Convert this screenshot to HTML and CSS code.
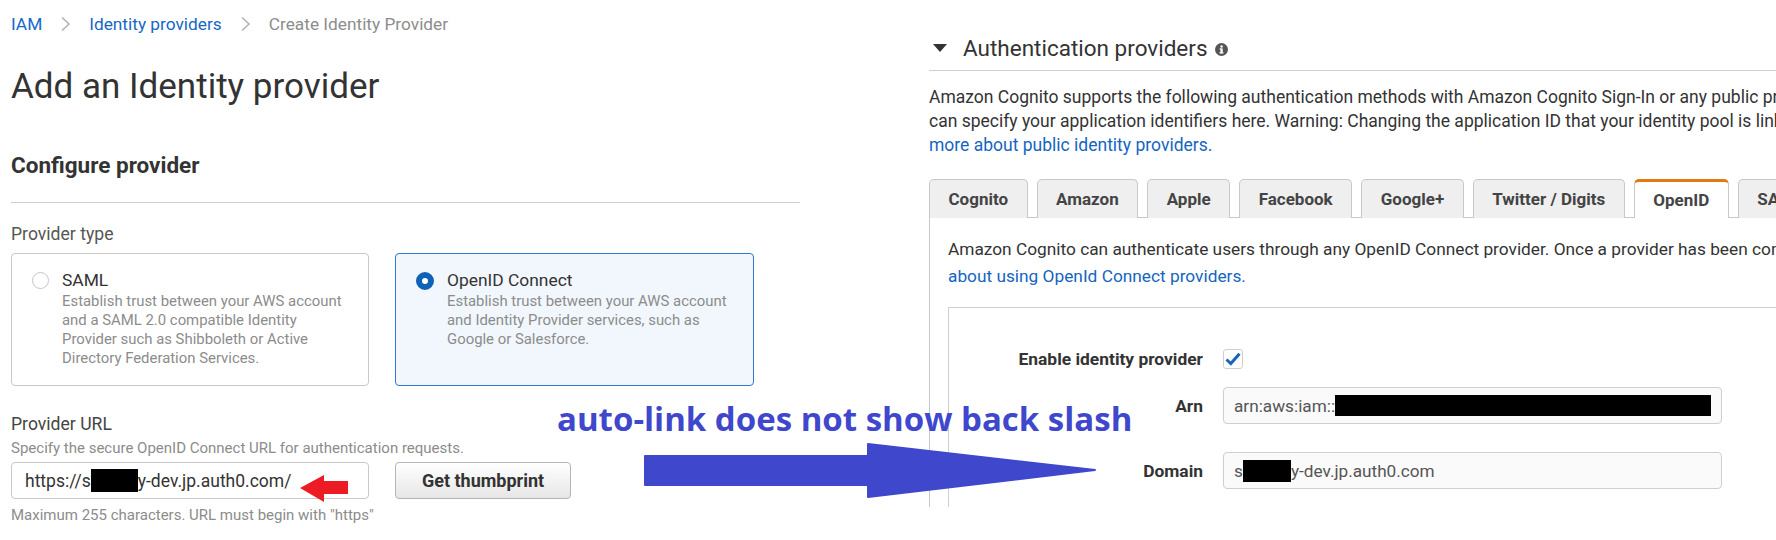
FILE: index.html
```html
<!DOCTYPE html>
<html lang="en">
<head>
<meta charset="utf-8">
<title>Add an Identity provider</title>
<link rel="stylesheet" href="styles.css">
</head>
<body>
<div class="page">
  <section class="left">
    <nav class="crumbs">
      <a class="crumb-link">IAM</a>
      <svg class="chev" width="11" height="16" viewBox="0 0 11 16"><polyline points="2,1.5 9,8 2,14.5" fill="none" stroke="#b4b4b4" stroke-width="1.6"/></svg>
      <a class="crumb-link">Identity providers</a>
      <svg class="chev" width="11" height="16" viewBox="0 0 11 16"><polyline points="2,1.5 9,8 2,14.5" fill="none" stroke="#b4b4b4" stroke-width="1.6"/></svg>
      <span class="crumb-current">Create Identity Provider</span>
    </nav>
    <h1 class="title">Add an Identity provider</h1>
    <h2 class="section-title">Configure provider</h2>
    <div class="divider"></div>
    <div class="field-label type-label">Provider type</div>
    <div class="cards">
      <div class="card">
        <span class="radio"></span>
        <div class="card-body">
          <div class="card-title">SAML</div>
          <div class="card-desc">Establish trust between your AWS account<br>and a SAML 2.0 compatible Identity<br>Provider such as Shibboleth or Active<br>Directory Federation Services.</div>
        </div>
      </div>
      <div class="card card-selected">
        <span class="radio radio-on"></span>
        <div class="card-body">
          <div class="card-title">OpenID Connect</div>
          <div class="card-desc">Establish trust between your AWS account<br>and Identity Provider services, such as<br>Google or Salesforce.</div>
        </div>
      </div>
    </div>
    <div class="field-label url-label">Provider URL</div>
    <div class="hint">Specify the secure OpenID Connect URL for authentication requests.</div>
    <div class="url-row">
      <div class="text-input">https://s<span class="redact redact-url"></span>y-dev.jp.auth0.com/</div>
      <button class="btn">Get thumbprint</button>
    </div>
    <div class="hint hint-after">Maximum 255 characters. URL must begin with "https"</div>
  </section>

  <section class="right">
    <div class="panel-head">
      <svg class="caret" width="14" height="8" viewBox="0 0 14 8"><polygon points="0,0 14,0 7,8" fill="#333"/></svg>
      <span class="panel-title">Authentication providers</span>
      <svg class="info" width="13" height="13" viewBox="0 0 13 13"><circle cx="6.5" cy="6.5" r="6.5" fill="#555"/><rect x="5.4" y="5.4" width="2.3" height="4.8" fill="#fff"/><rect x="4.5" y="9.3" width="4" height="1.2" fill="#fff"/><rect x="4.6" y="5.4" width="1.5" height="1.1" fill="#fff"/><circle cx="6.6" cy="3.4" r="1.25" fill="#fff"/></svg>
    </div>
    <div class="panel-text">
      <div class="line">Amazon Cognito supports the following authentication methods with Amazon Cognito Sign-In or any public provider. If you</div>
      <div class="line">can specify your application identifiers here. Warning: Changing the application ID that your identity pool is linked to</div>
      <div class="line"><a class="link">more about public identity providers.</a></div>
    </div>
    <div class="tabs">
      <div class="tab">Cognito</div>
      <div class="tab">Amazon</div>
      <div class="tab">Apple</div>
      <div class="tab">Facebook</div>
      <div class="tab">Google+</div>
      <div class="tab">Twitter / Digits</div>
      <div class="tab tab-active">OpenID</div>
      <div class="tab">SAML</div>
    </div>
    <div class="tab-body">
      <div class="tab-text">
        <div class="line">Amazon Cognito can authenticate users through any OpenID Connect provider. Once a provider has been configured,</div>
        <div class="line"><a class="link">about using OpenId Connect providers.</a></div>
      </div>
      <div class="inner-box">
        <div class="form-grid">
          <div class="form-label">Enable identity provider</div>
          <div class="check-cell">
            <span class="checkbox"><svg width="16" height="14" viewBox="0 0 16 14"><path d="M1.5 7.5 L5.8 11.5 L14.5 1.8" fill="none" stroke="#1a63b8" stroke-width="3"/></svg></span>
          </div>
          <div class="form-label label-arn">Arn</div>
          <div class="ro-input row-arn">arn:aws:iam::<span class="redact redact-arn"></span></div>
          <div class="form-label label-domain">Domain</div>
          <div class="ro-input row-domain">s<span class="redact redact-domain"></span>y-dev.jp.auth0.com</div>
        </div>
      </div>
    </div>
  </section>
</div>

<div class="note">auto-link does not show back slash</div>
<svg class="arrow-blue" width="470" height="70" viewBox="640 438 470 70">
  <polygon points="645,456 868,456 868,444 1095,470 868,497 868,485 645,485" fill="#3f48cc" stroke="#3f48cc" stroke-width="2" stroke-linejoin="round"/>
</svg>
<svg class="arrow-red" width="60" height="34" viewBox="296 472 60 34">
  <polygon points="300,488 324,475 324,481 348,481 348,494 324,494 324,502" fill="#ed1c24"/>
</svg>
</body>
</html>
```

FILE: styles.css
```css
html, body {
  margin: 0;
  padding: 0;
  background: #fff;
}
body {
  width: 1776px;
  height: 540px;
  overflow: hidden;
  position: relative;
  font-family: Roboto, "Liberation Sans", Arial, sans-serif;
  color: #333;
}
.page {
  display: flex;
  align-items: flex-start;
}

/* ---------- left ---------- */
.left {
  width: 789px;
  padding-left: 11px;
  flex: none;
}
.crumbs {
  display: flex;
  align-items: center;
  gap: 18px;
  padding-top: 14px;
  height: 20px;
  font-size: 17.3px;
  line-height: 20px;
}
.crumb-link {
  color: #1469c7;
}
.crumb-current {
  color: #8d8d8d;
}
.chev {
  display: block;
}
.title {
  margin: 32px 0 0;
  font-size: 35px;
  line-height: 42px;
  font-weight: 400;
  color: #333;
}
.section-title {
  margin: 44px 0 0;
  font-size: 22.5px;
  line-height: 26px;
  font-weight: 700;
  color: #333;
}
.divider {
  margin-top: 24px;
  height: 1px;
  background: #cfcfcf;
}
.field-label {
  font-size: 17.6px;
  line-height: 20px;
  color: #555;
}
.type-label {
  margin-top: 21px;
}
.cards {
  display: flex;
  gap: 26px;
  margin-top: 9px;
}
.card {
  box-sizing: border-box;
  width: 358px;
  height: 133px;
  border: 1px solid #c8c8c8;
  border-radius: 4px;
  display: flex;
  padding: 16px 10px 0 20px;
}
.card-selected {
  width: 359px;
  border-color: #2f7ad0;
  background: #f1f7fd;
}
.radio {
  box-sizing: border-box;
  flex: none;
  width: 17px;
  height: 17px;
  margin-top: 2px;
  border: 1.5px solid #c6c6c6;
  border-radius: 50%;
  background: #fff;
}
.radio-on {
  width: 18px;
  height: 18px;
  border: 6px solid #0f62b5;
}
.card-body {
  margin-left: 13px;
}
.card-title {
  font-size: 17.4px;
  line-height: 20px;
  color: #333;
}
.card-desc {
  margin-top: 2px;
  font-size: 14.9px;
  line-height: 19px;
  color: #8c8c8c;
}
.url-label {
  margin-top: 28px;
  color: #444;
}
.hint {
  margin-top: 5px;
  font-size: 15px;
  line-height: 18px;
  color: #8c8c8c;
}
.hint-after {
  margin-top: 7px;
}
.url-row {
  display: flex;
  gap: 26px;
  margin-top: 5px;
}
.text-input {
  box-sizing: border-box;
  width: 358px;
  height: 37px;
  border: 1px solid #c8c8c8;
  border-radius: 4px;
  padding: 0 13px;
  display: flex;
  align-items: center;
  font-size: 17.5px;
  color: #333;
  white-space: nowrap;
}
.redact {
  display: inline-block;
  background: #000;
}
.redact-url {
  width: 47px;
  height: 23px;
}
.btn {
  box-sizing: border-box;
  width: 176px;
  height: 37px;
  border: 1px solid #b5b5b5;
  border-radius: 4px;
  background: linear-gradient(#ffffff, #e6e6e6);
  font-family: Roboto, "Liberation Sans", Arial, sans-serif;
  font-size: 18px;
  font-weight: 700;
  color: #333;
  padding: 0;
}

/* ---------- right ---------- */
.right {
  margin-left: 129px;
  flex: 1;
  min-width: 0;
  height: 507px;
  overflow: hidden;
}
.panel-head {
  display: flex;
  align-items: center;
  height: 26px;
  padding-top: 35px;
  padding-bottom: 9px;
  border-bottom: 1px solid #cfcfcf;
}
.caret {
  margin-left: 4px;
  margin-right: 16px;
}
.panel-title {
  font-size: 22.5px;
  line-height: 26px;
  color: #333;
}
.info {
  margin-left: 7px;
  margin-top: 2px;
}
.panel-text {
  margin-top: 14px;
  font-size: 17.5px;
  line-height: 24px;
  color: #333;
}
.line {
  white-space: nowrap;
}
.link {
  color: #1565c0;
}
.tabs {
  display: flex;
  gap: 9px;
  margin-top: 22px;
  height: 38px;
  border-bottom: 1px solid #c8c8c8;
  white-space: nowrap;
}
.tab {
  box-sizing: border-box;
  height: 39px;
  padding: 0 18.5px;
  border: 1px solid #c8c8c8;
  border-bottom: none;
  border-radius: 5px 5px 0 0;
  background: #efefef;
  font-size: 17px;
  font-weight: 700;
  line-height: 38px;
  color: #444;
}
.tab-active {
  background: #fff;
  border-top: 3px solid #e47911;
  line-height: 36px;
  position: relative;
  z-index: 1;
}
.tab-body {
  border-left: 1px solid #c8c8c8;
  padding-left: 18px;
  padding-top: 18px;
  height: 400px;
}
.tab-text {
  font-size: 17.3px;
  line-height: 27px;
  color: #333;
}
.inner-box {
  margin-top: 17px;
  border-left: 1px solid #cfcfcf;
  border-top: 1px solid #cfcfcf;
  height: 300px;
  padding-top: 41px;
}
.form-grid {
  display: grid;
  grid-template-columns: 254px 499px;
  column-gap: 20px;
  align-items: center;
}
.form-label {
  text-align: right;
  font-size: 17.4px;
  font-weight: 700;
  color: #333;
}
.check-cell {
  height: 20px;
}
.checkbox {
  box-sizing: border-box;
  display: flex;
  align-items: center;
  justify-content: center;
  width: 20px;
  height: 20px;
  border: 1px solid #cfcfcf;
  border-radius: 3px;
  background: #fff;
}
.ro-input {
  box-sizing: border-box;
  height: 37px;
  border: 1px solid #cfcfcf;
  border-radius: 4px;
  background: #fafafa;
  padding: 0 10px;
  display: flex;
  align-items: center;
  font-size: 17.2px;
  color: #555;
  white-space: nowrap;
}
.row-arn, .label-arn {
  margin-top: 18px;
}
.row-domain, .label-domain {
  margin-top: 28px;
}
.redact-arn {
  width: 380px;
  height: 21px;
}
.redact-domain {
  width: 48px;
  height: 22px;
}

/* ---------- annotations (overlay) ---------- */
.note {
  position: absolute;
  left: 557px;
  top: 402px;
  font-family: "Open Sans", "Noto Sans", sans-serif;
  font-weight: 700;
  font-size: 33px;
  line-height: 33px;
  color: #3f48cc;
  white-space: nowrap;
}
.arrow-blue {
  position: absolute;
  left: 640px;
  top: 438px;
}
.arrow-red {
  position: absolute;
  left: 296px;
  top: 472px;
}
```
